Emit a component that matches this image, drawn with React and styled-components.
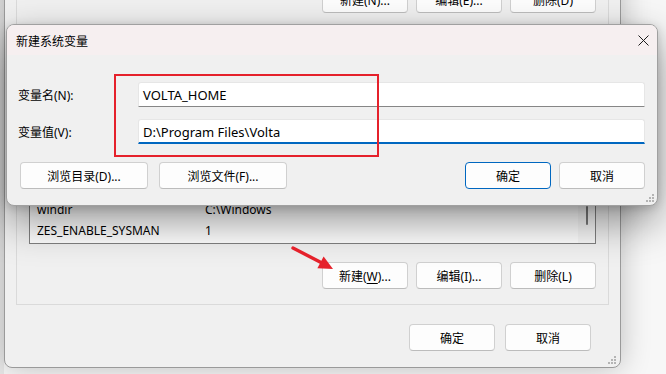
import styled, { createGlobalStyle } from 'styled-components';

const GlobalStyle = createGlobalStyle`
	html, body {
		margin: 0;
		padding: 0;
	}
	body {
		width: 666px;
		height: 374px;
		overflow: hidden;
		background: #f6f6f6;
		font-family: 'Segoe UI', 'Noto Sans', 'Noto Sans CJK SC', sans-serif;
		font-size: 12px;
		color: #000;
	}
`;

const systemVars = [
	['windir', 'C:\\Windows'],
	['ZES_ENABLE_SYSMAN', '1'],
];

const Grip = () => (
	<svg width="8" height="8" viewBox="0 0 8 8">
		<rect x="6" y="0" width="2" height="2" fill="#b4b4b4" />
		<rect x="3" y="3" width="2" height="2" fill="#b4b4b4" />
		<rect x="6" y="3" width="2" height="2" fill="#b4b4b4" />
		<rect x="0" y="6" width="2" height="2" fill="#b4b4b4" />
		<rect x="3" y="6" width="2" height="2" fill="#b4b4b4" />
		<rect x="6" y="6" width="2" height="2" fill="#b4b4b4" />
	</svg>
);

const App = () => {
	return (
		<Desktop>
			<GlobalStyle />

			<EnvWindow>
				<GroupBox $top>
					<ButtonRow>
						<Button>新建(N)...</Button>
						<Button>编辑(E)...</Button>
						<Button>删除(D)</Button>
					</ButtonRow>
				</GroupBox>

				<GroupBox $grow>
					<ListBox>
						<Rows>
							{systemVars.map(([name, value]) => (
								<Row key={name}>
									<NameCell>{name}</NameCell>
									<span>{value}</span>
								</Row>
							))}
						</Rows>
						<ScrollTrack>
							<Thumb />
						</ScrollTrack>
					</ListBox>
					<ButtonRow $gapTop>
						<Button>
							新建(<u>W</u>)...
						</Button>
						<Button>编辑(I)...</Button>
						<Button>删除(L)</Button>
					</ButtonRow>
				</GroupBox>

				<Footer>
					<Button>确定</Button>
					<Button>取消</Button>
				</Footer>

				<GripCorner $right={4} $bottom={3}>
					<Grip />
				</GripCorner>
			</EnvWindow>

			<Dialog>
				<TitleBar>
					<Title>新建系统变量</Title>
					<CloseButton>
						<svg width="11" height="11" viewBox="0 0 11 11">
							<path d="M0.5 0.5 L10.5 10.5 M10.5 0.5 L0.5 10.5" stroke="#1c1c1c" strokeWidth="1" />
						</svg>
					</CloseButton>
				</TitleBar>

				<DialogBody>
					<FieldGrid>
						<Label>变量名(N):</Label>
						<TextInput>VOLTA_HOME</TextInput>
						<Label>变量值(V):</Label>
						<TextInput $focused>D:\Program Files\Volta</TextInput>
					</FieldGrid>

					<DialogActions>
						<ActionGroup>
							<Button $wide>浏览目录(D)...</Button>
							<Button $wide>浏览文件(F)...</Button>
						</ActionGroup>
						<ActionGroup $tight>
							<Button $primary>确定</Button>
							<Button>取消</Button>
						</ActionGroup>
					</DialogActions>
				</DialogBody>

				<GripCorner $right={3} $bottom={3}>
					<Grip />
				</GripCorner>
			</Dialog>

			<Highlight />

			<Arrow width="50" height="32" viewBox="0 0 50 32">
				<line x1="5" y1="6" x2="34" y2="21" stroke="#e5212b" strokeWidth="3.4" strokeLinecap="round" />
				<polygon points="45,27 29.4,26.2 35.6,14.6" fill="#e5212b" />
			</Arrow>
		</Desktop>
	);
};

export default App;

const Desktop = styled.div`
	position: relative;
	width: 666px;
	height: 374px;
	overflow: hidden;
	background: linear-gradient(90deg, #e8e8e8 0, #e8e8e8 4px, #f7f7f7 4px);
`;

const EnvWindow = styled.div`
	position: absolute;
	left: 4px;
	top: -40px;
	width: 617px;
	height: 408px;
	box-sizing: border-box;
	display: flex;
	flex-direction: column;
	padding: 0 11px 16px 11px;
	background: #f0f0f0;
	border: 1px solid #9a9a9a;
	border-radius: 0 0 8px 8px;
	box-shadow: 0 0 30px rgba(0, 0, 0, 0.24);
`;

const GroupBox = styled.div`
	display: flex;
	flex-direction: column;
	border: 1px solid #dadada;
	padding: ${(p) => (p.$top ? '24px 12px 15px' : '12px 12px 15px')};
	margin-top: ${(p) => (p.$top ? '0' : '8px')};
	flex: ${(p) => (p.$grow ? '1' : 'none')};
	min-height: 0;
`;

const ButtonRow = styled.div`
	display: flex;
	justify-content: flex-end;
	gap: 8px;
	margin-top: ${(p) => (p.$gapTop ? '18px' : '0')};
`;

const Footer = styled.div`
	display: flex;
	justify-content: flex-end;
	gap: 10px;
	margin-top: 19px;
	padding-right: 18px;
`;

const Button = styled.button`
	box-sizing: border-box;
	width: ${(p) => (p.$wide ? '128px' : '86px')};
	height: 27px;
	padding: 0;
	font: inherit;
	font-size: 12px;
	color: #000;
	background: #fdfdfd;
	border: 1px solid ${(p) => (p.$primary ? '#0067c0' : '#d0d0d0')};
	border-bottom-color: ${(p) => (p.$primary ? '#0067c0' : '#bcbcbc')};
	border-radius: 4px;

	u {
		text-underline-offset: 2px;
	}
`;

const ListBox = styled.div`
	flex: 1;
	min-height: 0;
	display: flex;
	background: #fff;
	border: 1px solid #808080;
	overflow: hidden;
`;

const Rows = styled.div`
	flex: 1;
	display: flex;
	flex-direction: column;
	justify-content: flex-end;
	padding-bottom: 2px;
`;

const Row = styled.div`
	display: flex;
	align-items: center;
	height: 21px;
	padding-left: 7px;
	white-space: nowrap;
`;

const NameCell = styled.span`
	width: 168px;
`;

const ScrollTrack = styled.div`
	width: 17px;
	display: flex;
	flex-direction: column;
	justify-content: flex-end;
	align-items: center;
	background: #f8f8f8;
`;

const Thumb = styled.div`
	width: 2px;
	height: 19px;
	margin-bottom: 18px;
	background: #7a7a7a;
	border-radius: 1px;
`;

const GripCorner = styled.div`
	position: absolute;
	right: ${(p) => p.$right}px;
	bottom: ${(p) => p.$bottom}px;
	line-height: 0;
`;

const Dialog = styled.div`
	position: absolute;
	left: 6px;
	top: 24px;
	width: 652px;
	height: 182px;
	box-sizing: border-box;
	background: #f0f0f0;
	border: 1px solid #a0a0a0;
	border-radius: 8px;
	box-shadow: 0 16px 40px rgba(0, 0, 0, 0.42), 0 2px 10px rgba(0, 0, 0, 0.16);
	overflow: hidden;
`;

const TitleBar = styled.div`
	height: 30px;
	display: flex;
	align-items: center;
	justify-content: space-between;
	padding-left: 9px;
	background: #f6eff0;
`;

const Title = styled.span`
	font-size: 12px;
	font-family: 'Noto Sans CJK SC', sans-serif;
`;

const CloseButton = styled.div`
	width: 28px;
	height: 30px;
	display: flex;
	align-items: center;
	justify-content: center;
`;

const DialogBody = styled.div`
	padding: 27px 12px 16px 11px;
`;

const FieldGrid = styled.div`
	display: grid;
	grid-template-columns: 120px 1fr;
	row-gap: 12px;
	align-items: center;
`;

const Label = styled.span`
	font-size: 12px;
`;

const TextInput = styled.div`
	box-sizing: border-box;
	height: 25px;
	display: flex;
	align-items: center;
	padding: ${(p) => (p.$focused ? '1px 4px 0' : '0 4px')};
	background: #fff;
	border: 1px solid #e6e6e6;
	border-bottom: ${(p) => (p.$focused ? '2px solid #0067c0' : '1px solid #868686')};
	border-radius: 3px 3px 0 0;
	font-size: 13px;
`;

const DialogActions = styled.div`
	display: flex;
	justify-content: space-between;
	margin-top: 18px;
	padding-left: 2px;
`;

const ActionGroup = styled.div`
	display: flex;
	gap: ${(p) => (p.$tight ? '8px' : '11px')};
`;

const Highlight = styled.div`
	position: absolute;
	left: 114px;
	top: 74px;
	width: 265px;
	height: 83px;
	box-sizing: border-box;
	border: 2px solid #e5212b;
`;

const Arrow = styled.svg`
	position: absolute;
	left: 288px;
	top: 242px;
`;
